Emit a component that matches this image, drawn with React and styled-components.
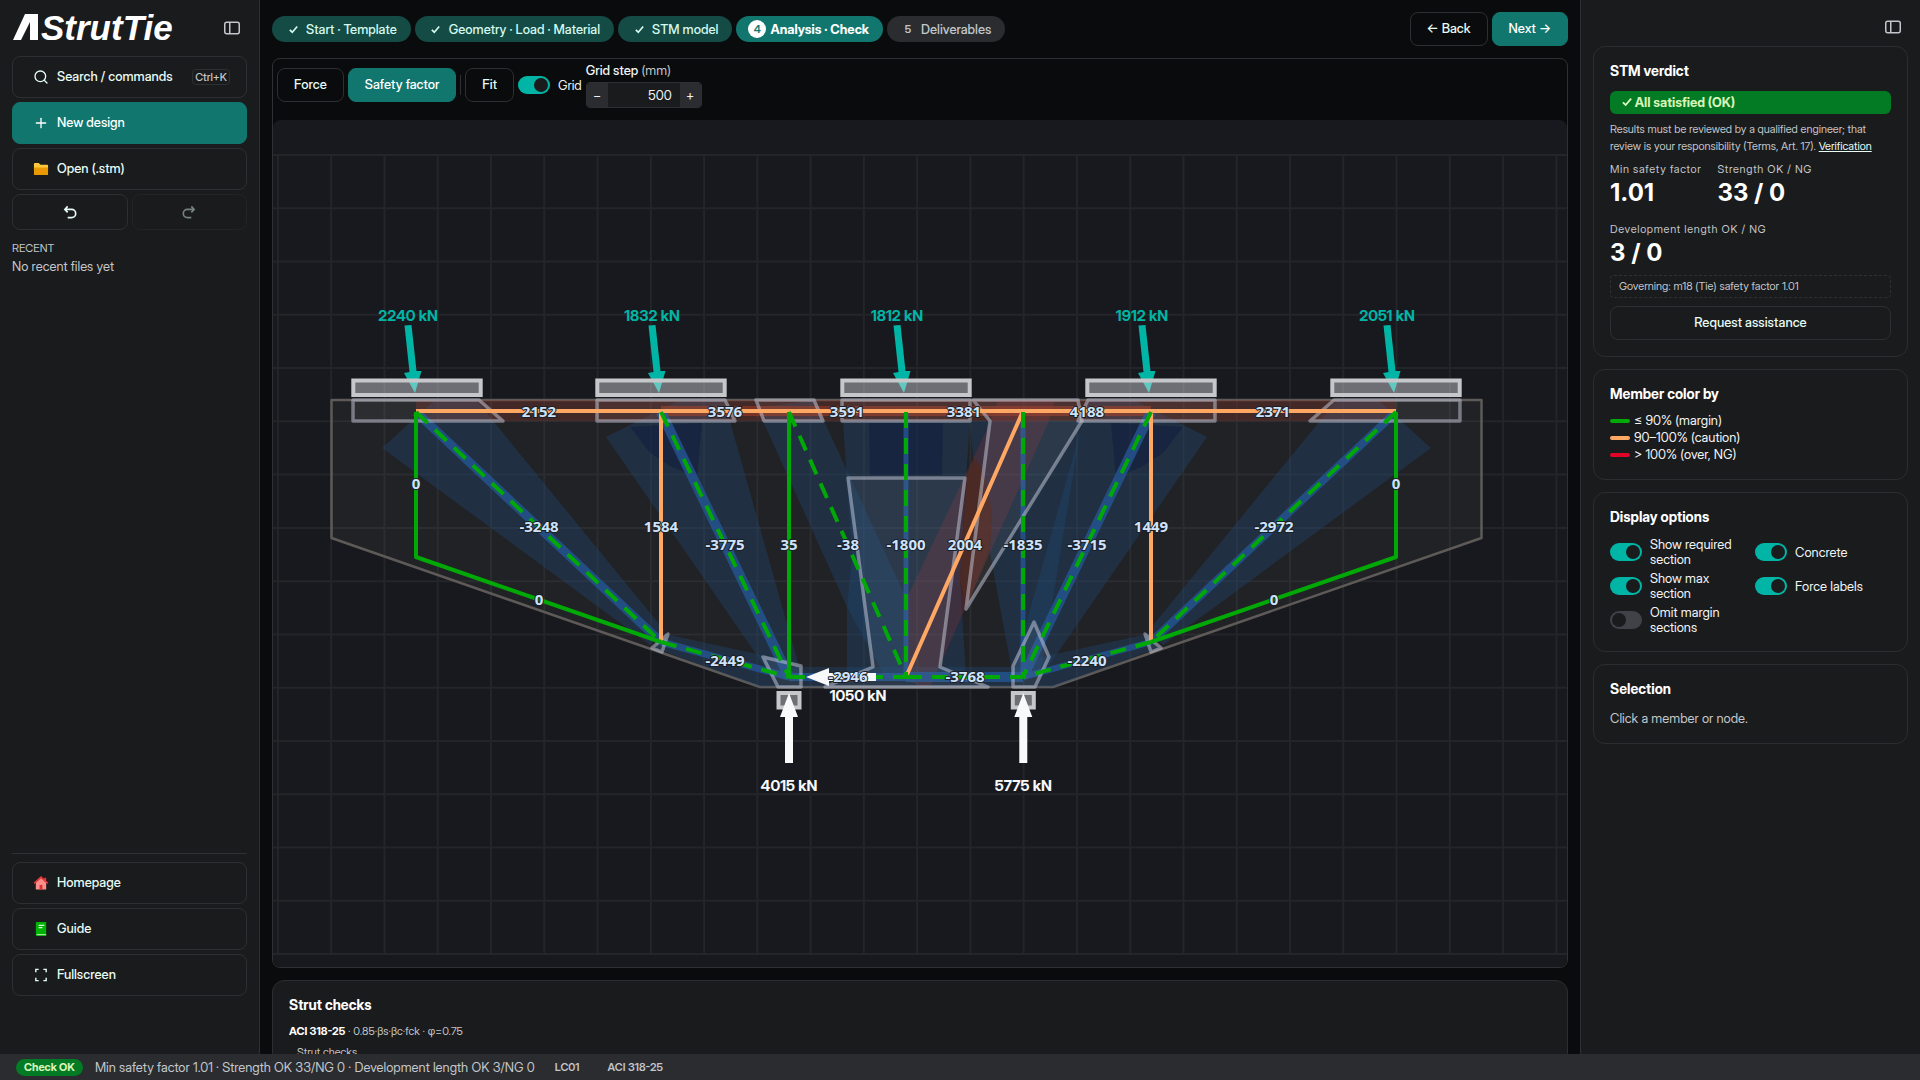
import React from "react";
import styled, { createGlobalStyle } from "styled-components";
import { Search, Plus } from "lucide-react";

const GlobalStyle = createGlobalStyle`
  *, *::before, *::after {
    box-sizing: border-box;
  }
  body {
    margin: 0;
    background: #090b0c;
    color: #f1f3f5;
    font-family: "Inter Display", Inter, "Liberation Sans", sans-serif;
    font-size: 13px;
    line-height: 17px;
    overflow: hidden;
  }
  button, input {
    font: inherit;
    color: inherit;
  }
`;

const Page = styled.div`
  height: 100vh;
  display: flex;
  flex-direction: column;
`;

const Columns = styled.div`
  flex: 1;
  min-height: 0;
  display: grid;
  grid-template-columns: 260px minmax(0, 1fr) 340px;
`;

const Sidebar = styled.nav`
  background: #1a1b1c;
  border-right: 1px solid #2e3033;
  padding: 8px 12px 58px;
  display: flex;
  flex-direction: column;
  gap: 4px;
`;

const Brand = styled.div`
  display: flex;
  align-items: center;
  justify-content: space-between;
  height: 40px;
  margin-bottom: 4px;
  padding-right: 7px;
`;

const Logo = styled.svg`
  width: 180px;
  height: 40px;
  text {
    font-family: "Liberation Sans", sans-serif;
    font-size: 35px;
    font-weight: 700;
    font-style: italic;
    fill: #fff;
  }
`;

const IconButton = styled.button`
  display: flex;
  padding: 0;
  border: 0;
  background: none;
  color: #c3c6ca;
`;

const Button = styled.button`
  height: ${(p) => p.$height || 34}px;
  padding: 0 16px 1px;
  border: 1px solid ${(p) => (p.$primary ? "#11766d" : "#2d2f32")};
  border-radius: 8px;
  background: ${(p) => (p.$primary ? "#11766d" : "transparent")};
  color: ${(p) => (p.$primary ? "#fff" : "#e6fcf5")};
  font-weight: 500;
  white-space: nowrap;
`;

const NavButton = styled(Button)`
  height: 42px;
  padding: 0 16px 1px 20px;
  display: flex;
  align-items: center;
  gap: 8px;
  svg {
    width: 16px;
    flex: none;
  }
`;

const Shortcut = styled.kbd`
  margin-left: auto;
  padding: 0 2px;
  border: 1px solid #2d2f32;
  border-radius: 4px;
  font-family: inherit;
  font-size: 11px;
  line-height: 14px;
  color: #c3c6ca;
`;

const History = styled.div`
  display: grid;
  grid-template-columns: 1fr 1fr;
  gap: 4px;
  svg {
    display: block;
    margin: 0 auto;
  }
  button:disabled {
    opacity: 0.45;
  }
`;

const RecentTitle = styled.h2`
  margin: 8px 0 0;
  font-size: 11px;
  font-weight: 400;
  line-height: 12px;
  color: #c3c6ca;
`;

const Muted = styled.p`
  margin: 0;
  color: #c3c6ca;
`;

const SideFoot = styled.div`
  margin-top: auto;
  padding-top: 8px;
  border-top: 1px solid #2e3033;
  display: flex;
  flex-direction: column;
  gap: 4px;
`;

const Main = styled.main`
  min-width: 0;
  min-height: 0;
  padding: 12px 12px 0;
  overflow: hidden;
  display: flex;
  flex-direction: column;
  gap: 12px;
`;

const TopBar = styled.header`
  display: flex;
  align-items: center;
  justify-content: space-between;
`;

const Steps = styled.ol`
  margin: 0;
  padding: 0;
  list-style: none;
  display: flex;
  gap: 4px;
`;

const Step = styled.li`
  display: flex;
  align-items: center;
  gap: 4px;
  height: 26px;
  padding: 0 14px 0 12px;
  border-radius: 13px;
  font-weight: ${(p) => (p.$state === "current" ? 700 : 500)};
  background: ${(p) => ({ done: "#154b45", current: "#11766d", todo: "#2a2c30" })[p.$state]};
  color: ${(p) => ({ done: "#d3f9ee", current: "#fff", todo: "#c3c6ca" })[p.$state]};
`;

const StepMark = styled.span`
  width: 18px;
  height: 18px;
  border-radius: 9px;
  display: flex;
  align-items: center;
  justify-content: center;
  font-size: 11px;
  font-weight: 600;
  background: ${(p) => (p.$on ? "#fff" : "none")};
  color: ${(p) => (p.$on ? "#11766d" : "inherit")};
`;

const Actions = styled.div`
  display: flex;
  gap: 4px;
`;

const Workspace = styled.section`
  flex: none;
  border: 1px solid #2e3033;
  border-radius: 8px;
  overflow: hidden;
`;

const Toolbar = styled.div`
  height: 61px;
  padding: 0 4px;
  display: flex;
  align-items: flex-start;
  gap: 4px;
  > button {
    margin-top: 9px;
  }
`;

const Divider = styled.span`
  width: 1px;
  height: 20px;
  margin-top: 16px;
  background: #2e3033;
`;

const GridToggle = styled.div`
  margin-top: 17px;
`;

const Stepper = styled.div`
  padding-top: 3px;
  label {
    display: block;
    font-weight: 500;
    line-height: 17px;
  }
  label span {
    color: #c3c6ca;
    font-weight: 400;
  }
`;

const StepperBox = styled.div`
  display: flex;
  width: 116px;
  height: 26px;
  margin-top: 3px;
  border: 1px solid #2d2f34;
  border-radius: 4px;
  overflow: hidden;
  background: #1a1b1c;
  button {
    width: 21px;
    padding: 0;
    border: 0;
    background: #2a2c30;
  }
  input {
    flex: 1;
    min-width: 0;
    padding: 0 8px;
    border: 0;
    background: none;
    text-align: right;
  }
`;

const Canvas = styled.svg`
  display: block;
  width: 100%;
  height: auto;
  border-radius: 8px;
  background: #18191e;
`;

const MemberLabel = styled.text`
  font-family: "Noto Sans", sans-serif;
  font-size: 15px;
  font-weight: 700;
  text-anchor: middle;
  fill: #cfe4fc;
  stroke: #1b1e24;
  stroke-width: 2px;
  paint-order: stroke;
  stroke-linejoin: round;
`;

const LoadLabel = styled.text`
  font-size: 15px;
  font-weight: 700;
  text-anchor: middle;
  fill: ${(p) => p.$color};
`;

const Card = styled.section`
  flex: none;
  border: 1px solid #2b2d30;
  border-radius: 12px;
  padding: 15px 16px 16px;
  background: #1a1b1c;
`;

const CardTitle = styled.h3`
  margin: 0;
  font-size: 14px;
  font-weight: 700;
  line-height: 17px;
  color: #fff;
`;

const CheckNote = styled.p`
  margin: 10px 0 0;
  font-size: 11px;
  line-height: 17px;
  color: #c3c6ca;
  b {
    color: #fff;
    font-weight: 700;
  }
`;

const CheckCaption = styled.p`
  margin: 4px 8px 0;
  font-size: 11px;
  color: #c3c6ca;
`;

const Inspector = styled.aside`
  background: #1a1b1c;
  border-left: 1px solid #2e3033;
  padding: 0 12px;
  display: flex;
  flex-direction: column;
  gap: 12px;
`;

const InspectorTop = styled.div`
  height: 34px;
  padding: 20px 7px 0;
  display: flex;
  justify-content: flex-end;
`;

const Verdict = styled.p`
  margin: 12px 0 0;
  padding: 0 12px;
  border-radius: 6px;
  background: #037b24;
  color: #d8f5b8;
  font-weight: 700;
  line-height: 23px;
`;

const Disclaimer = styled.p`
  margin: 7px 0 0;
  font-size: 11px;
  line-height: 17px;
  color: #c3c6ca;
  a {
    color: #e6fcf5;
  }
`;

const Metrics = styled.dl`
  margin: 6px 0 0;
  display: flex;
  flex-wrap: wrap;
  gap: 13px 16px;
  dt {
    font-size: 11px;
    line-height: 17px;
    letter-spacing: 0.06em;
    color: #c3c6ca;
  }
  dd {
    margin: 0;
    font-family: Inter, sans-serif;
    font-size: 24px;
    font-weight: 700;
    line-height: 30px;
    color: #fff;
  }
`;

const Governing = styled.p`
  margin: 7px 0 8px;
  padding: 2px 8px;
  border: 1px dashed #2e3033;
  border-radius: 4px;
  font-size: 11px;
  color: #c3c6ca;
`;

const WideButton = styled(Button)`
  width: 100%;
`;

const Legend = styled.ul`
  margin: 10px 0 0;
  padding: 0;
  list-style: none;
`;

const LegendItem = styled.li`
  display: flex;
  align-items: center;
  gap: 4px;
  line-height: 17px;
  &::before {
    content: "";
    width: 20px;
    height: 4px;
    border-radius: 2px;
    background: ${(p) => p.$color};
  }
`;

const Options = styled.div`
  margin-top: 12px;
  display: grid;
  grid-template-columns: 137px 1fr;
  row-gap: 4px;
  column-gap: 8px;
`;

const SwitchLabel = styled.label`
  display: flex;
  align-items: center;
  gap: 8px;
  line-height: 15px;
`;

const Switch = styled.input.attrs({ type: "checkbox", role: "switch" })`
  appearance: none;
  flex: none;
  width: 32px;
  height: 18px;
  margin: 0;
  padding: 2px;
  border-radius: 9px;
  background: #404247;
  &::before {
    content: "";
    display: block;
    width: 14px;
    height: 14px;
    border-radius: 7px;
    background: #1a1b1c;
  }
  &:checked {
    background: #00b5a5;
  }
  &:checked::before {
    margin-left: auto;
  }
`;

const Hint = styled(Muted)`
  margin-top: 13px;
`;

const StatusBar = styled.footer`
  flex: none;
  height: 26px;
  padding: 0 16px;
  display: flex;
  align-items: center;
  background: #2a2c30;
  color: #c3c6ca;
`;

const StatusBadge = styled.span`
  margin-right: 12px;
  padding: 0 8px;
  border-radius: 9px;
  background: #037b24;
  color: #d8f5b8;
  font-size: 11px;
  font-weight: 700;
`;

const StatusTag = styled.span`
  margin-left: ${(p) => p.$gap}px;
  font-size: 11px;
  font-weight: 600;
`;

function PanelIcon() {
  return (
    <svg width="16" height="14" viewBox="0 0 16 14" fill="none" stroke="currentColor" strokeWidth="1.500">
      <rect x="0.750" y="1.250" width="14.500" height="11.500" rx="2" />
      <path d="M5.750 1.250v11.500" />
    </svg>
  );
}

function FolderIcon() {
  return (
    <svg viewBox="0 0 17 17">
      <path d="M1 3q0-1 1-1h4l2 2h7q1 0 1 1v3H1z" fill="#ffc83d" />
      <path d="M1 7h15v7q0 1-1 1H2q-1 0-1-1z" fill="#e89a00" />
    </svg>
  );
}

function HouseIcon() {
  return (
    <svg viewBox="0 0 17 17">
      <path d="M3 7l5.500-4.500L14 7v8.500H3z" fill="#ff8f8c" />
      <path d="M8.500 1L0.600 8.200l1.200 1.300L8.500 3.800l6.700 5.700 1.200-1.300L14 6V3h-2v1.200z" fill="#e0393e" />
      <path d="M7 10.500h3v5H7z" fill="#d13438" />
    </svg>
  );
}

function BookIcon() {
  return (
    <svg viewBox="0 0 17 17">
      <path d="M3 2q0-1 1-1h10v15H4q-1 0-1-1z" fill="#00b300" />
      <path d="M4 14h10v1H4z" fill="#c8f0c8" />
      <path d="M6 4h6v1.200H6zM6 6.500h4v1.200H6z" fill="#d8ffd8" />
    </svg>
  );
}

function FullscreenIcon() {
  return (
    <svg viewBox="0 0 17 17" fill="none" stroke="currentColor" strokeWidth="1.500">
      <path d="M3 5.500V2.500h3M11 2.500h3v3M14 11.500v3h-3M6 14.500H3v-3" />
    </svg>
  );
}

function TurnIcon({ flip }) {
  return (
    <svg width="14" height="14" viewBox="0 0 14 15" fill="none" stroke="currentColor" strokeWidth="1.800">
      <g transform={flip ? "matrix(-1 0 0 1 14 0)" : undefined}>
        <path d="M4.500 1.500L1.500 4.700l3 3.200M1.500 4.700h7.200a4.300 4.300 0 0 1 0 8.800H4.500" />
      </g>
    </svg>
  );
}

function CheckIcon({ size = 9 }) {
  return (
    <svg width={size} height={size} viewBox="0 0 9 9" fill="none" stroke="currentColor" strokeWidth="1.700">
      <path d="M0.800 4.800L3.300 7.200 8.200 1.500" />
    </svg>
  );
}

const STEPS = [
  { label: "Start · Template", state: "done" },
  { label: "Geometry · Load · Material", state: "done" },
  { label: "STM model", state: "done" },
  { label: "Analysis · Check", state: "current" },
  { label: "Deliverables", state: "todo" },
];

const GREEN = "#00a905";
const ORANGE = "#ffa864";
const TEAL = "#00b5a5";

const GRID_X = Array.from({ length: 25 }, (_, i) => 277.9 + i * 53.27);
const GRID_Y = Array.from({ length: 16 }, (_, i) => 155 + i * 53.27);

const STRUT_ZONES = [
  "382,448 435,400 476,400 664,630 650,645",
  "606,437 680,400 724,400 802,677 772,677",
  "757,408 815,400 825,423 907,600 907,677 885,677 847,607",
  "843,421 970,421 966,477 960,580 966,677 847,677 847,607 852,557",
  "970,421 1082,421 1040,677 1013,677 990,553 992,510 973,458",
  "1207,437 1133,400 1089,400 1011,677 1041,677",
  "1431,448 1378,400 1337,400 1149,630 1163,645",
  "665,634 789,661 789,687 760,687 655,648",
  "1148,634 1023,661 1023,687 1053,687 1158,648",
  "789,667 1023,667 1023,687 789,687",
];

const DARK_ZONES = [
  "630,427 702,423 697,478 670,466 650,453",
  "869,423 943,423 942,475 870,475",
  "1183,427 1111,423 1116,478 1143,466 1163,453",
];

const TIE_ZONE = "990,423 998,400 1055,400 1048,423 931,685 922,686 906,680 906,600";

const NODE_ZONES = [
  "353,400 479,400 503,421 353,421",
  "597,400 725,400 735,421 597,421",
  "756,400 814,400 823,421 764,421",
  "842,400 970,400 970,421 842,421",
  "973,400 990,421 966,609 1082,421 1078,400",
  "1088,400 1215,400 1215,421 1078,421",
  "1334,400 1460,400 1460,421 1310,421",
  "848,478 965,478 940,667 988,687 825,687 873,667",
  "763,657 801,666 801,687 778,687",
  "1034,622 1049,657 1035,687 1013,687 1013,666",
  "668,634 662,652 652,648",
  "1145,634 1151,652 1161,648",
];

// [x1, y1, x2, y2, required width]
const STRUTS = [
  [416, 412, 661, 642, 9],
  [661, 412, 789, 677, 10],
  [789, 412, 906, 677, 0],
  [906, 412, 906, 677, 5],
  [1023, 412, 1023, 677, 5],
  [1151, 412, 1023, 677, 10],
  [1396, 412, 1151, 642, 8],
  [661, 642, 789, 677, 7],
  [789, 677, 906, 677, 8],
  [906, 677, 1023, 677, 10],
  [1151, 642, 1023, 677, 6],
];

const LABELS = [
  ["2152", 539, 412], ["3576", 725, 412], ["3591", 847, 412], ["3381", 964, 412], ["4188", 1087, 412], ["2371", 1273, 412],
  ["0", 416, 484], ["0", 539, 600], ["-3248", 539, 527], ["1584", 661, 527], ["-3775", 725, 545], ["35", 789, 545],
  ["-38", 848, 545], ["-1800", 906, 545], ["2004", 965, 545], ["-1835", 1023, 545], ["-3715", 1087, 545], ["1449", 1151, 527],
  ["-2972", 1274, 527], ["0", 1396, 484], ["0", 1274, 600], ["-2449", 725, 661], ["-2240", 1087, 661], ["-2946", 848, 677],
  ["-3768", 965, 677],
];

const LOADS = [
  ["2240 kN", 415], ["1832 kN", 659], ["1812 kN", 904], ["1912 kN", 1149], ["2051 kN", 1394],
];

const PLATES = [353.3, 597.3, 842.3, 1087.3, 1332.3];

const REACTIONS = [
  ["4015 kN", 789], ["5775 kN", 1023.3],
];

function Diagram() {
  return (
    <Canvas viewBox="273 120 1294 847" role="img" aria-label="Strut-and-tie model">
      <g stroke="#232529" strokeWidth="2">
        {GRID_X.map((x) => <path key={x} d={`M${x} 155V954`} />)}
        {GRID_Y.map((y) => <path key={y} d={`M273 ${y}H1567`} />)}
      </g>
      <path
        d="M331.500 400H1481.500V538L1053 687H760L331.500 538Z"
        fill="#fff"
        fillOpacity="0.04"
        stroke="#5d5a58"
        strokeWidth="2.500"
        strokeLinejoin="round"
      />
      <g fill="#1f5082" fillOpacity="0.3">
        {STRUT_ZONES.map((p) => <polygon key={p} points={p} />)}
      </g>
      <g fill="#101c40" fillOpacity="0.5">
        {DARK_ZONES.map((p) => <polygon key={p} points={p} />)}
      </g>
      <polygon points={TIE_ZONE} fill="#83363a" fillOpacity="0.3" />
      <rect x="416" y="400" width="980" height="21" fill="#8a3528" fillOpacity="0.32" />
      <polygon points="975,458 967,477 960,580 967,607 990,547 992,510 982,468" fill="#4d2a25" fillOpacity="0.9" />
      <rect x="661" y="406" width="490" height="10" fill="#8a3526" fillOpacity="0.75" />

      {STRUTS.map(([x1, y1, x2, y2, w]) => (
        <line key={`r${x1}-${x2}-${y1}`} x1={x1} y1={y1} x2={x2} y2={y2} stroke="#25538f" strokeOpacity="0.85" strokeWidth={w} />
      ))}
      <g fill="#fff" fillOpacity="0.05" stroke="#c9cede" strokeOpacity="0.5" strokeWidth="3.500" strokeLinejoin="round">
        {NODE_ZONES.map((p) => <polygon key={p} points={p} />)}
      </g>

      <g fill="none" strokeWidth="4" strokeLinejoin="round">
        <path d="M416 411H1396M661 411V642M1151 411V642M906 677L1023 411" stroke={ORANGE} />
        <path d="M416 412V557L661 642M1396 412V557L1151 642M789 412V677" stroke={GREEN} />
        <g stroke={GREEN} strokeDasharray="16 10">
          {STRUTS.map(([x1, y1, x2, y2]) => (
            <path key={`s${x1}-${x2}-${y1}`} d={`M${x1} ${y1}L${x2} ${y2}`} />
          ))}
        </g>
      </g>

      <g fill={TEAL}>
        {LOADS.map(([label, x]) => (
          <path key={label} d={`M${x} 393L${x - 11} 373L${x - 5.500} 372L${x - 10.500} 325.500L${x - 3.500} 325L${x + 1.500} 371L${x + 6.500} 371Z`} />
        ))}
      </g>
      {LOADS.map(([label, x]) => (
        <LoadLabel key={label} x={x - 7} y="321" $color={TEAL}>{label}</LoadLabel>
      ))}
      <g fill="#dfe2e6" fillOpacity="0.43" stroke="#c5c7ca" strokeWidth="4">
        {PLATES.map((x) => <rect key={x} x={x} y="380.500" width="127.400" height="14.500" />)}
        {REACTIONS.map(([label, x]) => <rect key={label} x={x - 10.500} y="693" width="21" height="14.500" />)}
      </g>

      <g fill="#f8f9fa">
        {REACTIONS.map(([label, x]) => (
          <path key={label} d={`M${x} 693L${x + 9} 717H${x + 4}V763H${x - 4}V717H${x - 9}Z`} />
        ))}
        <path d="M806 677L829 668V673H876V681H829V686Z" />
      </g>
      {REACTIONS.map(([label, x]) => (
        <LoadLabel key={label} x={x} y="791" $color="#f8f9fa">{label}</LoadLabel>
      ))}
      <LoadLabel x="858" y="701" $color="#f8f9fa">1050 kN</LoadLabel>
      {LABELS.map(([label, x, y]) => (
        <MemberLabel key={`${label}-${x}`} x={x} y={y + 5}>{label}</MemberLabel>
      ))}
    </Canvas>
  );
}

function Toggle({ label, on }) {
  return (
    <SwitchLabel>
      <Switch defaultChecked={on} />
      {label}
    </SwitchLabel>
  );
}

export default function App() {
  return (
    <>
      <GlobalStyle />
      <Page>
        <Columns>
          <Sidebar>
            <Brand>
              <Logo viewBox="0 0 180 40" role="img" aria-label="AStrutTie">
                <path d="M1 32L13 6h13v26h-8V14L9 32z" fill="#fff" />
                <text x="29" y="32">StrutTie</text>
              </Logo>
              <IconButton aria-label="Collapse sidebar"><PanelIcon /></IconButton>
            </Brand>
            <NavButton><Search size={16} />Search / commands<Shortcut>Ctrl+K</Shortcut></NavButton>
            <NavButton $primary><Plus size={16} />New design</NavButton>
            <NavButton><FolderIcon />Open (.stm)</NavButton>
            <History>
              <Button $height={36} aria-label="Undo"><TurnIcon /></Button>
              <Button $height={36} aria-label="Redo" disabled><TurnIcon flip /></Button>
            </History>
            <RecentTitle>RECENT</RecentTitle>
            <Muted>No recent files yet</Muted>
            <SideFoot>
              <NavButton><HouseIcon />Homepage</NavButton>
              <NavButton><BookIcon />Guide</NavButton>
              <NavButton><FullscreenIcon />Fullscreen</NavButton>
            </SideFoot>
          </Sidebar>

          <Main>
            <TopBar>
              <Steps>
                {STEPS.map((step, i) => (
                  <Step key={step.label} $state={step.state}>
                    <StepMark $on={step.state === "current"}>{step.state === "done" ? <CheckIcon /> : i + 1}</StepMark>
                    {step.label}
                  </Step>
                ))}
              </Steps>
              <Actions>
                <Button>← Back</Button>
                <Button $primary>Next →</Button>
              </Actions>
            </TopBar>

            <Workspace>
              <Toolbar>
                <Button>Force</Button>
                <Button $primary>Safety factor</Button>
                <Divider />
                <Button>Fit</Button>
                <GridToggle><Toggle label="Grid" on /></GridToggle>
                <Stepper>
                  <label htmlFor="grid-step">Grid step <span>(mm)</span></label>
                  <StepperBox>
                    <button aria-label="Decrease">−</button>
                    <input id="grid-step" defaultValue="500" />
                    <button aria-label="Increase">+</button>
                  </StepperBox>
                </Stepper>
              </Toolbar>
              <Diagram />
            </Workspace>

            <Card>
              <CardTitle>Strut checks</CardTitle>
              <CheckNote><b>ACI 318-25</b> · 0.85·βs·βc·fck · φ=0.75</CheckNote>
              <CheckCaption>Strut checks</CheckCaption>
            </Card>
          </Main>

          <Inspector>
            <InspectorTop>
              <IconButton aria-label="Collapse panel"><PanelIcon /></IconButton>
            </InspectorTop>
            <Card>
              <CardTitle>STM verdict</CardTitle>
              <Verdict><CheckIcon size={10} /> All satisfied (OK)</Verdict>
              <Disclaimer>
                Results must be reviewed by a qualified engineer; that
                review is your responsibility (Terms, Art. 17). <a href="#verification">Verification</a>
              </Disclaimer>
              <Metrics>
                <div><dt>Min safety factor</dt><dd>1.01</dd></div>
                <div><dt>Strength OK / NG</dt><dd>33 / 0</dd></div>
                <div><dt>Development length OK / NG</dt><dd>3 / 0</dd></div>
              </Metrics>
              <Governing>Governing: m18 (Tie) safety factor 1.01</Governing>
              <WideButton>Request assistance</WideButton>
            </Card>
            <Card>
              <CardTitle>Member color by</CardTitle>
              <Legend>
                <LegendItem $color={GREEN}>≤ 90% (margin)</LegendItem>
                <LegendItem $color={ORANGE}>90–100% (caution)</LegendItem>
                <LegendItem $color="#e00526">&gt; 100% (over, NG)</LegendItem>
              </Legend>
            </Card>
            <Card>
              <CardTitle>Display options</CardTitle>
              <Options>
                <Toggle label="Show required section" on />
                <Toggle label="Concrete" on />
                <Toggle label="Show max section" on />
                <Toggle label="Force labels" on />
                <Toggle label="Omit margin sections" />
              </Options>
            </Card>
            <Card>
              <CardTitle>Selection</CardTitle>
              <Hint>Click a member or node.</Hint>
            </Card>
          </Inspector>
        </Columns>

        <StatusBar>
          <StatusBadge>Check OK</StatusBadge>
          Min safety factor 1.01 · Strength OK 33/NG 0 · Development length OK 3/NG 0
          <StatusTag $gap={20}>LC01</StatusTag>
          <StatusTag $gap={28}>ACI 318-25</StatusTag>
        </StatusBar>
      </Page>
    </>
  );
}
